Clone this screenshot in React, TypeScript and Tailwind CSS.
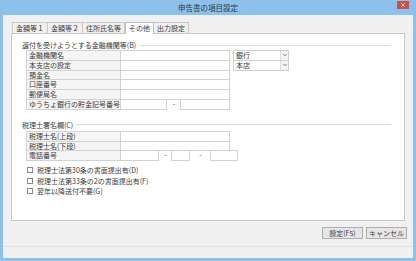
import { ChevronDown, X } from 'lucide-react'

const font = { fontFamily: '"Noto Sans CJK JP", "Noto Sans", sans-serif' }

const tabs = ['金額等１', '金額等２', '住所氏名等', 'その他', '出力設定']

function GroupTitle({ text }: { text: string }) {
  return (
    <div className="flex items-center gap-[3px] h-[10px]">
      <span className="whitespace-nowrap">{text}</span>
      <div className="flex-1 h-px bg-[#dcdcdc]" />
    </div>
  )
}

function Row({ label, children }: { label: string; children?: React.ReactNode }) {
  return (
    <div className="flex h-[10.8px] -mt-px first:mt-0">
      <div className="w-[95px] shrink-0 border border-[#d2d2d2] bg-[#f5f5f5] pl-[2px] leading-[9px] whitespace-nowrap">
        {label}
      </div>
      {children ?? <div className="w-[110px] -ml-px border border-[#d2d2d2] bg-white" />}
    </div>
  )
}

function Box({ w }: { w: string }) {
  return <div className={`${w} -ml-px border border-[#d2d2d2] bg-white`} />
}

function Select({ value }: { value: string }) {
  return (
    <div className="flex h-[10.8px] w-[56px] border border-[#cfcfcf] bg-white -mt-px first:mt-0">
      <span className="flex-1 pl-[2px] leading-[9px]">{value}</span>
      <div className="w-[8px] border-l border-[#dcdcdc] bg-[#f4f4f4] flex items-center justify-center">
        <ChevronDown size={6} strokeWidth={3} className="text-[#555]" />
      </div>
    </div>
  )
}

function Check({ label }: { label: string }) {
  return (
    <div className="flex items-center gap-[4px] h-[10.5px]">
      <div className="w-[6px] h-[6px] border border-[#8a8a8a] bg-white" />
      <span>{label}</span>
    </div>
  )
}

export default function App() {
  return (
    <div style={font} className="w-[416px] h-[261px] bg-[#8dc1ec] text-[7px] text-[#3a3a3a] flex flex-col">
      {/* title bar */}
      <div className="h-[15px] grid grid-cols-[1fr_auto_1fr] items-start">
        <div />
        <div className="pt-[2px] text-[7.5px] text-[#2a3a4a] leading-[11px]">申告書の項目設定</div>
        <div className="flex justify-end pr-[7px] pt-px">
          <div className="w-[12px] h-[8px] bg-[#c7504a] flex items-center justify-center">
            <X size={6} strokeWidth={3} className="text-white" />
          </div>
        </div>
      </div>

      {/* client area */}
      <div className="mx-[3px] h-[243px] bg-[#f0f0f0] flex flex-col">
        <div className="pl-[9px] pt-[7px] flex items-end h-[18px]">
          {tabs.map((t, i) => (
            <div
              key={t}
              className={
                i === 3
                  ? 'h-[12px] px-[3px] bg-white border border-b-0 border-[#bdbdbd] leading-[10px] -mb-px relative z-10'
                  : 'h-[11px] px-[3px] bg-[#f0f0f0] border border-b-0 border-[#c9c9c9] leading-[10px] -ml-px first:ml-0'
              }
            >
              {t}
            </div>
          ))}
        </div>

        {/* panel */}
        <div className="ml-[8px] w-[394px] h-[188px] bg-white border border-[#c9c9c9] pl-[10px] pr-[13px] pt-[6px]">
          <GroupTitle text="還付を受けようとする金融機関等(B)" />
          <div className="flex gap-[3px] pl-[4px]">
            <div className="flex flex-col">
              <Row label="金融機関名" />
              <Row label="本支店の設定" />
              <Row label="預金名" />
              <Row label="口座番号" />
              <Row label="郵便局名" />
              <Row label="ゆうちょ銀行の貯金記号番号">
                <div className="flex">
                  <Box w="w-[47px]" />
                  <span className="w-[14px] text-center leading-[9px]">-</span>
                  <Box w="w-[50px]" />
                </div>
              </Row>
            </div>
            <div className="flex flex-col">
              <Select value="銀行" />
              <Select value="本店" />
            </div>
          </div>

          <div className="mt-[10px]">
            <GroupTitle text="税理士署名欄(C)" />
          </div>
          <div className="flex flex-col pl-[4px] mt-[1px]">
            <Row label="税理士名(上段)" />
            <Row label="税理士名(下段)" />
            <Row label="電話番号">
              <div className="flex">
                <Box w="w-[39px]" />
                <span className="w-[13px] text-center leading-[9px]">-</span>
                <Box w="w-[19px]" />
                <span className="w-[21px] text-center leading-[9px]">-</span>
                <Box w="w-[28px]" />
              </div>
            </Row>
          </div>

          <div className="mt-[4px] pl-[5px] flex flex-col">
            <Check label="税理士法第30条の書面提出有(D)" />
            <Check label="税理士法第33条の2の書面提出有(F)" />
            <Check label="翌年以降送付不要(G)" />
          </div>
        </div>

        {/* buttons */}
        <div className="flex justify-end gap-[3px] pr-[6px] pt-[6px]">
          <div className="w-[41px] h-[12px] border border-[#adadad] bg-[#e6e6e6] flex items-center justify-center">設定(F5)</div>
          <div className="w-[41px] h-[12px] border border-[#adadad] bg-[#e6e6e6] flex items-center justify-center">キャンセル</div>
        </div>
        <div className="mt-[7px] h-px bg-[#e2e2e2]" />
      </div>
    </div>
  )
}
